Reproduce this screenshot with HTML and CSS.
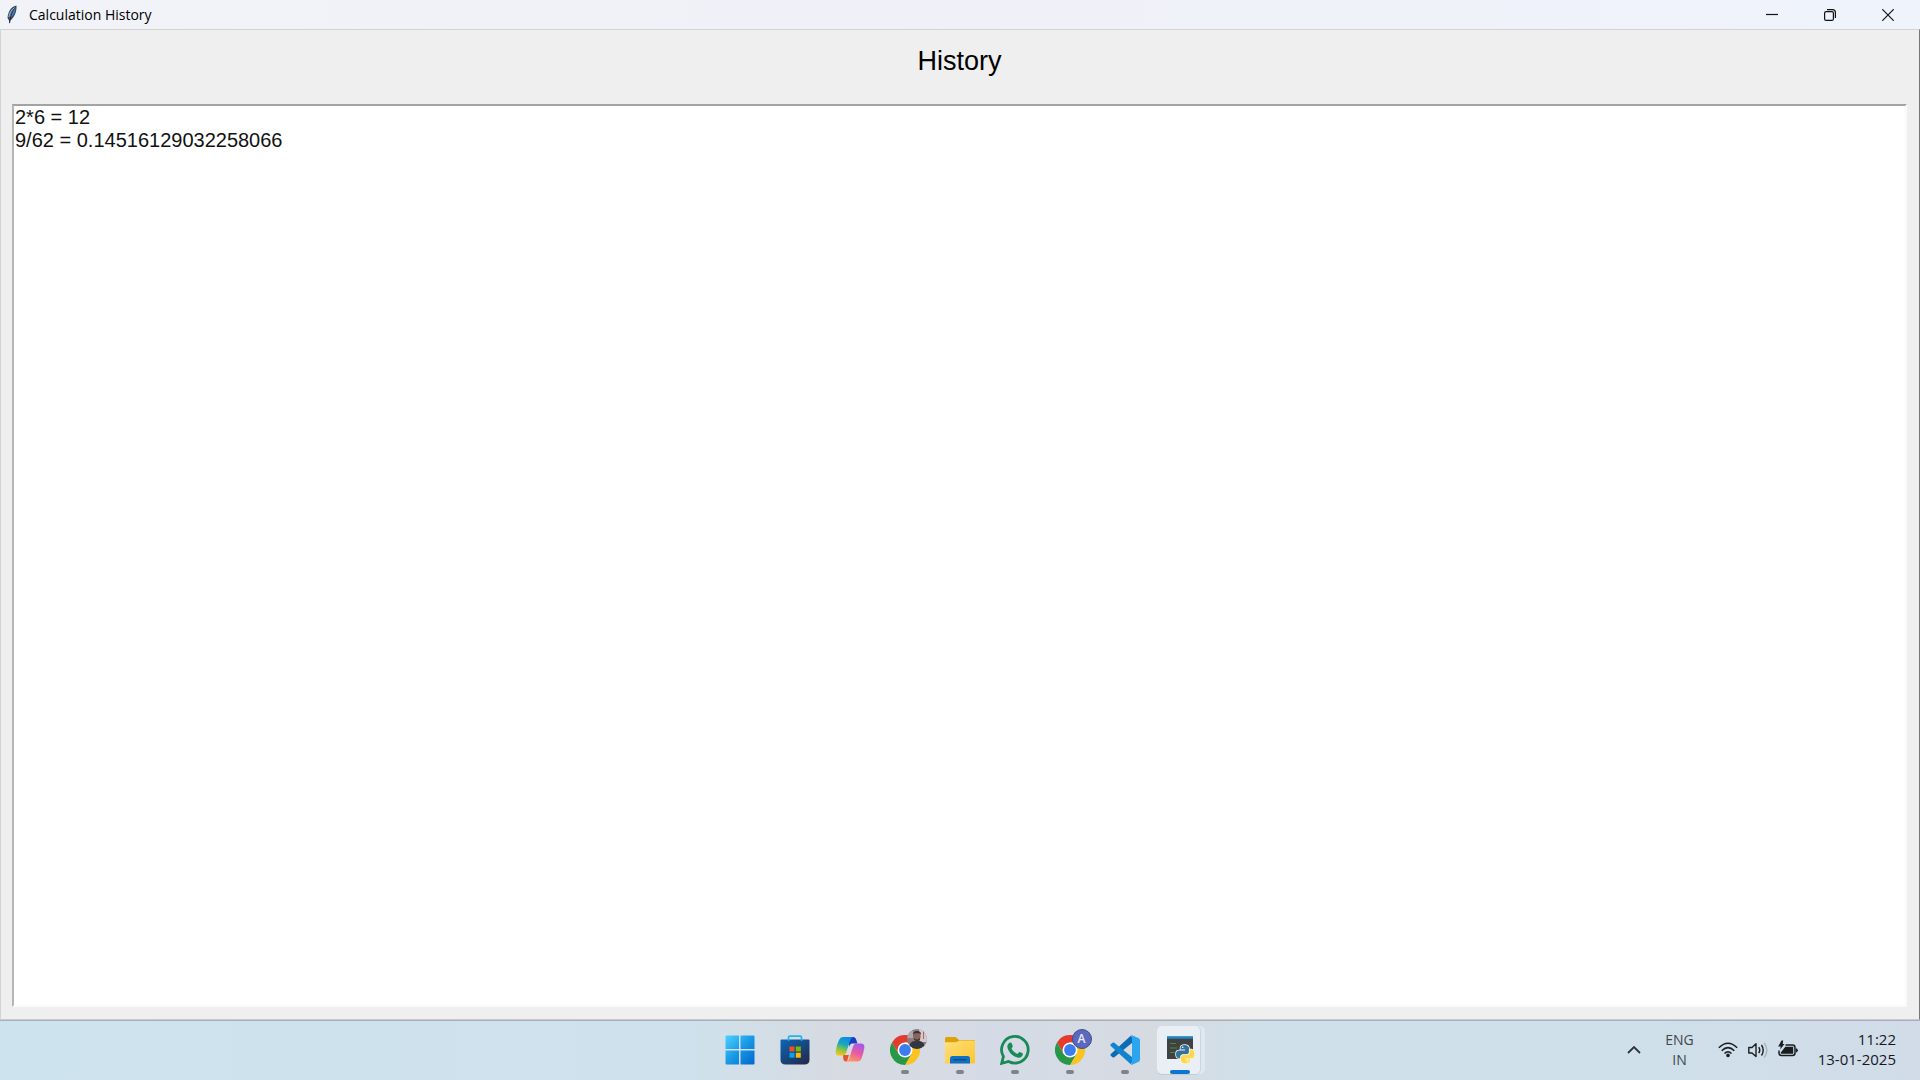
FILE: index.html
```html
<!DOCTYPE html>
<html lang="en">
<head>
<meta charset="utf-8">
<title>Calculation History</title>
<link rel="stylesheet" href="styles.css">
</head>
<body>
<main class="window">
  <header class="titlebar">
    <svg class="feather" viewBox="0 0 12 20" aria-hidden="true">
      <path d="M10.500 0.500C6 1 2 6 1.500 13L3 15.500L3.500 19L4.200 15.500C8 13 11 7 10.500 0.500Z" fill="#3d4450"/>
      <path d="M9.500 2C6 4 3.600 8 3.500 13.500C7 11.500 9.600 7 9.500 2Z" fill="#3f86d0"/>
      <path d="M9.300 2.500C6.500 6 4.500 10 3.600 18" fill="none" stroke="#1f2835" stroke-width="1"/>
      <path d="M8.500 2.800C5.500 4.500 3.400 8 2.900 12" fill="none" stroke="#a8bdd0" stroke-width="1"/>
    </svg>
    <span class="title">Calculation History</span>
    <button class="caption" aria-label="Minimize"><svg viewBox="0 0 12 12"><path d="M0 5.500H12"/></svg></button>
    <button class="caption" aria-label="Restore"><svg viewBox="0 0 12 12"><rect x=".6" y="2.600" width="8.800" height="8.800" rx="1.500"/><path d="M3 .6H8.500Q11.400 .6 11.400 3.500V9"/></svg></button>
    <button class="caption" aria-label="Close"><svg viewBox="0 0 12 12"><path d="M.3 .3L11.700 11.700M11.700 .3L.3 11.700"/></svg></button>
  </header>
  <section class="client">
    <h1 class="heading"><label for="history">History</label></h1>
    <textarea class="history" id="history" readonly spellcheck="false">2*6 = 12
9/62 = 0.14516129032258066</textarea>
  </section>
</main>
<footer class="taskbar">
  <nav class="apps">
    <button class="app" aria-label="Start">
      <svg viewBox="0 0 30 30"><defs><linearGradient id="win" x1="0" y1="0" x2="30" y2="30" gradientUnits="userSpaceOnUse"><stop offset="0" stop-color="#4fd4ff"/><stop offset=".5" stop-color="#1998e5"/><stop offset="1" stop-color="#0066cc"/></linearGradient></defs>
      <path fill="url(#win)" d="M1.500 .5H14V14H.5V1.500Q.5 .5 1.500 .5ZM15.500 .5H28.500Q29.500 .5 29.500 1.500V14H15.500ZM.5 15.500H14V29.500H1.500Q.5 29.500 .5 28.500ZM15.500 15.500H29.500V28.500Q29.500 29.500 28.500 29.500H15.500Z"/></svg>
    </button>
    <button class="app" aria-label="Microsoft Store">
      <svg viewBox="0 0 30 30"><defs><linearGradient id="bag" x1="0" y1="0" x2=".8" y2="1"><stop offset="0" stop-color="#0b67b8"/><stop offset="1" stop-color="#232c4e"/></linearGradient></defs>
      <path d="M.5 5.500Q.5 4.500 1.500 4.500H28.500Q29.500 4.500 29.500 5.500V24.500Q29.500 29.500 24.500 29.500H5.500Q.5 29.500 .5 24.500Z" fill="url(#bag)"/>
      <path d="M8.500 5.800V2.500Q8.500 1.200 9.800 1.200H20.200Q21.500 1.200 21.500 2.500V5.800" fill="none" stroke="#22b4ec" stroke-width="1.700"/>
      <path fill="#f25022" d="M9.500 11.500H14.500V16.500H9.500Z"/><path fill="#7fba00" d="M15.800 11.500H20.800V16.500H15.800Z"/><path fill="#00a4ef" d="M9.500 17.700H14.500V22.700H9.500Z"/><path fill="#ffb900" d="M15.800 17.700H20.800V22.700H15.800Z"/></svg>
    </button>
    <button class="app" aria-label="Copilot">
      <svg viewBox="0 0 30 30"><defs>
      <linearGradient id="cpa" x1=".6" y1="0" x2=".3" y2="1"><stop offset="0" stop-color="#0b8be8"/><stop offset=".4" stop-color="#18a8bd"/><stop offset=".72" stop-color="#8fc63f"/><stop offset="1" stop-color="#f5c518"/></linearGradient>
      <linearGradient id="cpb" x1=".7" y1="0" x2=".3" y2="1"><stop offset="0" stop-color="#a35be8"/><stop offset=".5" stop-color="#e75aa5"/><stop offset="1" stop-color="#ff9a60"/></linearGradient></defs>
      <path d="M14 2H18Q20.500 2 21.300 5L22.500 8.500H17Q15 8.500 14 12Z" fill="#173fc4"/>
      <path d="M8 20H14L12 26.500H11Q9 26.500 8.300 24Z" fill="#e8542e"/>
      <path d="M8 2H18Q16 2.500 15 6L11 18Q10 20.500 7.500 20.500H4Q.2 20.500 .7 16Q1.500 10 4 5Q5.300 2 8 2Z" fill="url(#cpa)"/>
      <path d="M22.500 26.500H11Q13.500 26 14.500 22.500L18 11.500Q19 8.500 21.500 8.500H26Q30 8.500 29.300 13Q28.500 18.500 26.500 23.500Q25.300 26.500 22.500 26.500Z" fill="url(#cpb)"/></svg>
    </button>
    <button class="app running" aria-label="Google Chrome, first profile">
      <svg viewBox="0 0 30 30"><defs><g id="chrome"><path d="M2 7.500A15 15 0 0 1 28 7.500H15L8.500 18.750Z" fill="#e33b2e"/><path d="M28 7.500A15 15 0 0 1 15 30L21.500 18.750L15 7.500Z" fill="#fcc31e"/><path d="M2 7.500A15 15 0 0 0 15 30L21.500 18.750H8.500Z" fill="#279847"/><circle cx="15" cy="15" r="7.500" fill="#fff"/><circle cx="15" cy="15" r="5.900" fill="#3b7ded"/></g></defs><use href="#chrome"/></svg>
      <svg class="badge" viewBox="0 0 20 20"><defs><clipPath id="face"><circle cx="10" cy="10" r="10"/></clipPath></defs><g clip-path="url(#face)"><path fill="#8a7c7f" d="M0 0H20V20H0Z"/><path fill="#d3cbcd" d="M12 0H20V13H13Z"/><path fill="#b6625c" d="M16 2H17V10H16Z"/><path fill="#b1a6a8" d="M0 2H6V9H0Z"/><path fill="#353740" d="M2 20Q2 12 8 12H13Q18 13 18 20Z"/><ellipse cx="10" cy="7.500" rx="3.600" ry="4.800" fill="#8b645a"/><path fill="#3b3032" d="M6.200 6Q5.500 2 10 2Q14.500 2 13.800 6L12.500 4.300H7.500ZM7 9Q10 12 13 9V10.500Q10 14 7 10.500Z"/></g></svg>
    </button>
    <button class="app running" aria-label="File Explorer">
      <svg viewBox="0 0 30 30"><defs><linearGradient id="folder" x1="0" y1="0" x2="1" y2="1"><stop offset="0" stop-color="#ffe07c"/><stop offset="1" stop-color="#fcc52f"/></linearGradient></defs><path d="M0 3.500Q0 2 1.500 2H10Q11 2 11.800 2.900L14 5H28.500Q30 5 30 6.500V12H0Z" fill="#dda109"/><path d="M0 7.200H11Q12 7.200 13 6.200L14 5.500H28.500Q30 5.500 30 7V28.500H0Z" fill="url(#folder)"/><path d="M5 28.500V23.500Q5 21 7.500 21H22.500Q25 21 25 23.500V28.500Z" fill="#0d72c5"/><path d="M8.500 24.700H21.500" stroke="#0a4681" stroke-width="1.200"/></svg>
    </button>
    <button class="app running" aria-label="WhatsApp">
      <svg viewBox="0 0 30 30"><path d="M1.700 28.300L3.400 21.500A13.300 13.300 0 1 1 8.600 26.500Z" fill="none" stroke="#178a55" stroke-width="2.800"/><path d="M10.500 7.500C11.400 7.300 11.600 8 12.700 11C12.900 12 11.600 12.800 11.500 13.500C12.600 16 15 18 17.400 18.900C18.200 18.700 18.900 17.200 19.700 17.100C21.200 17.600 22.600 18.100 22.900 18.800C22.800 21.400 20.800 22.700 18.600 22.700C13 22 8 17 7.300 11.500C7.500 9 9 7.700 10.500 7.500Z" fill="#178a55"/></svg>
    </button>
    <button class="app running" aria-label="Google Chrome, profile A">
      <svg viewBox="0 0 30 30"><use href="#chrome"/></svg>
      <span class="badge letter">A</span>
    </button>
    <button class="app running" aria-label="Visual Studio Code">
      <svg viewBox="0 0 30 30"><path d="M22 8L4.300 22.200Q3.400 22.900 2.500 22.200L.8 20.700Q0 19.800 .8 19L21 .5L22 3Z" fill="#0b6cb5"/><path d="M22 22L4.300 7.800Q3.400 7.100 2.500 7.800L.8 9.300Q0 10.200 .8 11L21 29.500L22 27Z" fill="#1183cf"/><path d="M21 .5Q21.700 0 22.600 .4L28.800 3.300Q30 3.900 30 5.200V24.800Q30 26.100 28.800 26.700L22.600 29.600Q21.700 30 21 29.500L22 28V2Z" fill="#2ba5ee"/></svg>
    </button>
    <button class="app running active" aria-label="Python">
      <svg viewBox="0 0 30 30"><path d="M2 1.500H28V24H2Z" fill="#414141"/><path d="M2 1.500H28V3.700H2Z" fill="#168bd0"/><path d="M5 8.500H11M5 13H12M5 17.500H10" stroke="#3b8c43" stroke-width="1.200"/><g stroke="#f4f6f5" stroke-width="1.600" stroke-linejoin="round" paint-order="stroke"><path d="M19.500 10Q24 10 24 13.500V17Q24 19.500 21.500 19.500H17.500Q15.500 19.500 15.500 22V23H13.500Q11 23 11 19Q11 15.500 14 15.500H20V14.500H15.500V13Q15.500 10 19.500 10Z" fill="#33719f"/><path d="M20.500 28.500Q16 28.500 16 25V22.500Q16 20 18.500 20H22Q24.700 20 24.700 17.500V14.500H26.500Q29.500 15 29.500 19Q29.500 23.500 26.500 23.500H20.500V24.500H25V25.500Q25 28.500 20.500 28.500Z" fill="#ffd84b"/></g><circle cx="17.700" cy="12.300" r=".8" fill="#fff"/><circle cx="22.700" cy="26.300" r=".8" fill="#fff"/></svg>
    </button>
  </nav>
  <div class="tray">
    <button class="trayitem" aria-label="Show hidden icons"><svg class="chevron" viewBox="0 0 14 8"><path d="M1 7L7 1L13 7" fill="none" stroke="#303438" stroke-width="1.800"/></svg></button>
    <button class="trayitem language">ENG<br>IN</button>
    <button class="trayitem status" aria-label="Network, volume and battery">
      <svg viewBox="0 0 20 20"><path d="M.8 7.700Q10-1.300 19.200 7.700M3.700 10.700Q10 4.500 16.300 10.700M6.500 13.500Q10 10 13.500 13.500" fill="none" stroke="#191d20" stroke-width="1.500"/><circle cx="10" cy="15.400" r="1.800" fill="#191d20"/></svg>
      <svg viewBox="0 0 20 20"><path d="M.8 7.500H4L8 3.800V16.500L4 13H.8Z" fill="none" stroke="#191d20" stroke-width="1.400" stroke-linejoin="round"/><path d="M10.800 7.200Q12.800 10.200 10.800 13.200M13.500 5Q17 10.200 13.500 15.500" fill="none" stroke="#191d20" stroke-width="1.400"/><path d="M16.200 3Q21.500 10.200 16.200 17.500" fill="none" stroke="#a5b2bb" stroke-width="1.300"/></svg>
      <svg viewBox="0 0 20 20"><path d="M7.500 5H14.500Q17 5 17 7.500V13Q17 15.500 14.500 15.500H3.500Q1 15.500 1 13V10.500" fill="none" stroke="#191d20" stroke-width="1.500"/><path d="M7.300 6.800H15.200V13.700H2.800V12.600ZM18 8.500H19L20 10.300L19 12.300H18Z" fill="#191d20"/><path d="M3.500 .5H5.200L4.700 4H6.500L2.200 9.500L2.700 6.500H.2Z" fill="#191d20"/></svg>
    </button>
    <button class="trayitem clock">11:22<br>13-01-2025</button>
  </div>
</footer>
</body>
</html>
```
FILE: styles.css
```css
* {
  box-sizing: border-box;
}

body {
  margin: 0;
  min-height: 100vh;
  display: flex;
  flex-direction: column;
  font-family: "Open Sans", "Noto Sans", sans-serif;
}

button {
  margin: 0;
  padding: 0;
  border: 0;
  background: none;
  color: inherit;
  font: inherit;
}

svg {
  display: block;
}

.window {
  flex: 1;
  display: flex;
  flex-direction: column;
}

.titlebar {
  height: 29px;
  display: flex;
  align-items: center;
  padding: 0 3px 0 6px;
  background: linear-gradient(90deg, #f2f3f8, #f0f1f8 50%, #eff3fb);
}

.feather {
  width: 12px;
  height: 20px;
}

.title {
  flex: 1;
  padding-left: 11px;
  color: #000;
  font-size: 14px;
  line-height: 20px;
}

.caption {
  width: 58px;
  height: 28px;
  display: grid;
  place-items: center;
}

.caption svg {
  width: 12px;
  height: 12px;
  fill: none;
  stroke: #111;
  stroke-width: 1.2;
}

.client {
  flex: 1;
  display: flex;
  flex-direction: column;
  padding: 10px 12px 12px 11px;
  border: 1px solid #d3d3d3;
  border-right-color: #777;
  border-bottom-color: #c9cbcd;
  background: #efefef;
  font-family: "Liberation Sans", Arial, sans-serif;
}

.heading {
  margin: 0 0 22px;
  color: #000;
  font-size: 27px;
  font-weight: 400;
  line-height: 42px;
  text-align: center;
}

.history {
  flex: 1;
  width: 100%;
  margin: 0;
  padding: 0 1px;
  border: 2px solid;
  border-color: #a3a3a3 #fafafa #fafafa #b5b5b5;
  border-radius: 0;
  outline: 0;
  resize: none;
  background: #fff;
  color: #111;
  font-family: inherit;
  font-size: 20px;
  line-height: 23px;
}

.taskbar {
  height: 60px;
  display: grid;
  grid-template-columns: 1fr auto 1fr;
  align-items: center;
  padding-bottom: 2px;
  border-top: 1px solid #a8b0b7;
  background: linear-gradient(90deg, #cde3ee, #cfe1ec 36%, #d7dae1 44%, #d5dbe6 52%, #d6dbe2 60%, #cfe0ea 66%, #cfe0eb 85%, #d1dce8);
}

.apps {
  grid-column: 2;
  display: flex;
}

.app {
  position: relative;
  width: 55px;
  height: 57px;
  display: grid;
  place-items: center;
}

.app svg {
  position: relative;
  width: 30px;
  height: 30px;
}

.app .badge {
  position: absolute;
  top: 8px;
  right: 6px;
  width: 20px;
  height: 20px;
}

.letter {
  border: 1px solid #414b91;
  border-radius: 50%;
  background: #5b69bd;
  color: #e8eafa;
  font-size: 12px;
  font-weight: 600;
  line-height: 18px;
  text-align: center;
}

.running::after {
  content: "";
  position: absolute;
  bottom: 4px;
  left: 50%;
  width: 8px;
  height: 4px;
  margin-left: -4px;
  border-radius: 2px;
  background: #7f8387;
}

.active::before {
  content: "";
  position: absolute;
  top: 5px;
  left: 4px;
  width: 43px;
  height: 48px;
  border-radius: 5px;
  background: #e9eff5;
  box-shadow: 1px 0 0 #c9d5df, 5px 0 0 #e0e8ef, 0 1px 0 #c3ccd5;
}

.active::after {
  width: 20px;
  margin-left: -10px;
  background: #0b74d4;
}

.tray {
  grid-column: 3;
  display: flex;
  align-items: center;
  justify-content: flex-end;
  padding-right: 24px;
  color: #16191c;
  font-size: 15px;
  line-height: 20px;
}

.chevron {
  width: 14px;
  height: 8px;
}

.language {
  margin: 0 24px;
  color: #42474b;
  font-size: 14px;
}

.status {
  display: flex;
  gap: 10px;
}

.status svg {
  width: 20px;
  height: 20px;
}

.clock {
  margin-left: 20px;
  padding-bottom: 2px;
  text-align: right;
}
```
